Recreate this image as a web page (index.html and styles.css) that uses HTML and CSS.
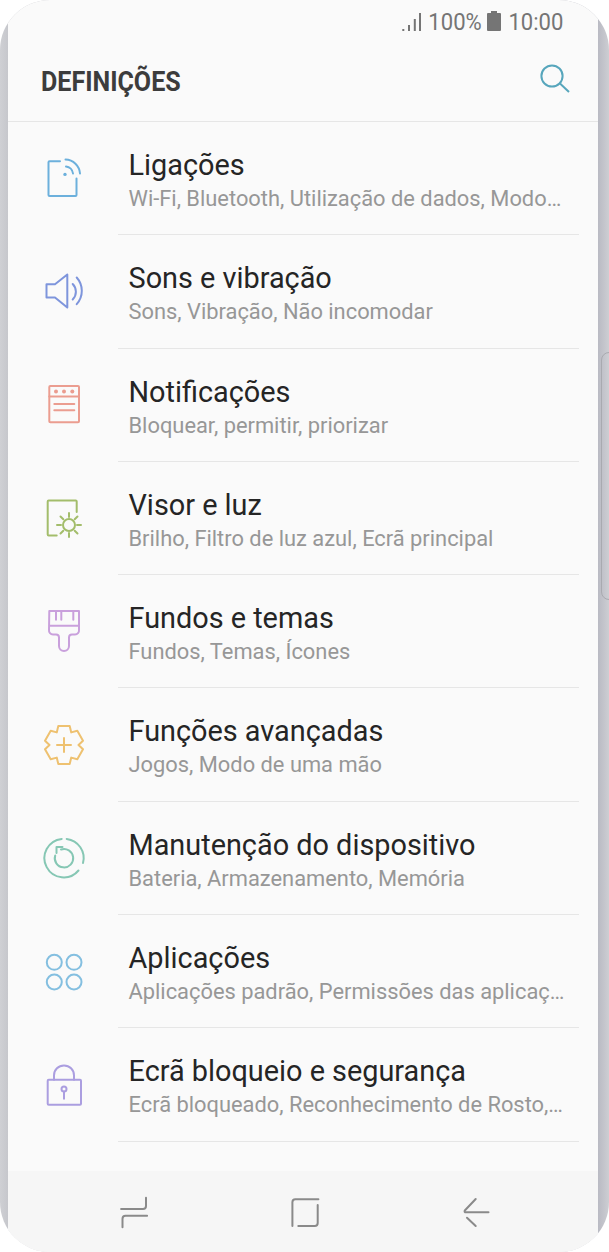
FILE: index.html
```html
<!DOCTYPE html>
<html lang="pt">
<head>
<meta charset="utf-8">
<title>Definições</title>
<link rel="stylesheet" href="styles.css">
</head>
<body>
<div class="phone">
  <span class="side-key"></span>
  <div class="screen">
    <div class="status">
      <svg class="signal" width="20" height="20" viewBox="0 0 20 20"><path d="M2.3 18v2M8 14v6M13.8 8v12M19 2v18"/></svg>
      <span class="pct">100%</span>
      <svg class="battery" width="14" height="20" viewBox="0 0 14 20"><path d="M4 0h6v2h3a1 1 0 0 1 1 1v16a1 1 0 0 1-1 1H1a1 1 0 0 1-1-1V3a1 1 0 0 1 1-1h3z"/></svg>
      <span class="clock">10:00</span>
    </div>
    <header class="toolbar">
      <h1 class="title">DEFINIÇÕES</h1>
      <svg class="search" width="32" height="32" viewBox="0 0 32 32"><circle cx="13" cy="13" r="10.6"/><path d="M21 20.5l9 8.5"/></svg>
    </header>
    <ul class="list">
      <li class="row">
        <svg class="icon c-blue" viewBox="0 0 48 48"><path d="M20 6.2H9.5a1 1 0 0 0-1 1V40a1 1 0 0 0 1 1h26a1 1 0 0 0 1-1V23.5M25.5 4.5A15 15 0 0 1 40 18.5M26 11.5A8 8 0 0 1 33 18.5"/><circle class="fill" cx="25" cy="19.4" r="1.7"/></svg>
        <div class="text"><div class="name">Ligações</div><div class="sub">Wi-Fi, Bluetooth, Utilização de dados, Modo…</div></div>
      </li>
      <li class="row">
        <svg class="icon c-indigo" viewBox="0 0 48 48"><path d="M27.3 6.5L15 16.2H6.5V29.5H15L27.3 39.5ZM32.7 16A11 11 0 0 1 32.7 31.5M36.7 9.5A20 20 0 0 1 36.7 36.2"/></svg>
        <div class="text"><div class="name">Sons e vibração</div><div class="sub">Sons, Vibração, Não incomodar</div></div>
      </li>
      <li class="row">
        <svg class="icon c-red" viewBox="0 0 48 48"><rect x="9.3" y="5" width="29.7" height="36.3" rx="1"/><path d="M9.3 15.6H39M14.3 22.9H34.3M14.3 29.2H34.3"/><circle class="fill" cx="16" cy="10.6" r="2"/><circle class="fill" cx="24" cy="10.6" r="2"/><circle class="fill" cx="32.3" cy="10.6" r="2"/></svg>
        <div class="text"><div class="name">Notificações</div><div class="sub">Bloquear, permitir, priorizar</div></div>
      </li>
      <li class="row">
        <svg class="icon c-green" viewBox="0 0 48 48"><path d="M16.7 40.6H8.7a1 1 0 0 1-1-1V6.6a1 1 0 0 1 1-1H35.7a1 1 0 0 1 1 1V17"/><circle cx="29" cy="30" r="6"/><path d="M29 18v4M29 38v4M17 30h4M37 30h4M20.5 21.5l2.8 2.8M34.7 35.7l2.8 2.8M20.5 38.5l2.8-2.8M34.7 24.3l2.8-2.8"/></svg>
        <div class="text"><div class="name">Visor e luz</div><div class="sub">Brilho, Filtro de luz azul, Ecrã principal</div></div>
      </li>
      <li class="row">
        <svg class="icon c-purple" viewBox="0 0 48 48"><path d="M9.3 3.1H39V22a4 4 0 0 1-4 4.5h-3a3 3 0 0 0-3 3V38a5 5 0 0 1-10 0V29.5a3 3 0 0 0-3-3h-3a4 4 0 0 1-4-4.5ZM9.3 17.7H39M16 3.1V11.7M21.3 3.1V11.7M33.3 3.1V11.7"/></svg>
        <div class="text"><div class="name">Fundos e temas</div><div class="sub">Fundos, Temas, Ícones</div></div>
      </li>
      <li class="row">
        <svg class="icon c-yellow" viewBox="0 0 48 48"><path d="M18.3 5H29.7L31.25 11.4L37.3 9.7L43 19.8L38.5 24L43 28.2L37.3 38.3L31.25 36.6L29.7 43H18.3L16.75 36.6L10.7 38.3L5 28.2L9.5 24L5 19.8L10.7 9.7L16.75 11.4ZM24 17V31M17 24H31"/></svg>
        <div class="text"><div class="name">Funções avançadas</div><div class="sub">Jogos, Modo de uma mão</div></div>
      </li>
      <li class="row">
        <svg class="icon c-teal" viewBox="0 0 48 48"><path d="M26.7 4.9A19.3 19.3 0 0 1 43 29M38.5 36.5A19.3 19.3 0 1 1 21.7 4.9M21 15.5A9.2 9.2 0 1 1 15.2 21.5M22.5 13H16.5V19"/></svg>
        <div class="text"><div class="name">Manutenção do dispositivo</div><div class="sub">Bateria, Armazenamento, Memória</div></div>
      </li>
      <li class="row">
        <svg class="icon c-sky" viewBox="0 0 48 48"><circle cx="14.3" cy="14.3" r="7.5"/><circle cx="34" cy="14.3" r="7.5"/><circle cx="14.3" cy="34" r="7.5"/><circle cx="34" cy="34" r="7.5"/></svg>
        <div class="text"><div class="name">Aplicações</div><div class="sub">Aplicações padrão, Permissões das aplicaç…</div></div>
      </li>
      <li class="row">
        <svg class="icon c-violet" viewBox="0 0 48 48"><rect x="7.7" y="18.7" width="33.3" height="25" rx="1"/><path d="M14 18.7V14.4A10 10 0 0 1 34 14.4V18.7M24 30.6V37.7"/><circle cx="24" cy="28.1" r="2.5"/></svg>
        <div class="text"><div class="name">Ecrã bloqueio e segurança</div><div class="sub">Ecrã bloqueado, Reconhecimento de Rosto,…</div></div>
      </li>
    </ul>
    <nav class="nav">
      <svg class="nav-icon" viewBox="0 0 40 40"><path d="M7.1 19H29a3 3 0 0 0 3-3V7.7M33.1 25.7H11.5a3 3 0 0 0-3 3V37.3"/></svg>
      <svg class="nav-icon" viewBox="0 0 40 40"><path d="M7.4 36V12.3a3 3 0 0 1 3-3H33.4M32.7 15V33a3 3 0 0 1-3 3H13.3"/></svg>
      <svg class="nav-icon" viewBox="0 0 40 40"><path d="M19.7 9L8.8 20.5Q8 22.3 10 22.3H32.5M11 27.7L19.7 36"/></svg>
    </nav>
  </div>
</div>
</body>
</html>
```
FILE: styles.css
```css
* { box-sizing: border-box; }
html, body { margin: 0; padding: 0; background: #fff; }
body { font-family: Roboto, "Liberation Sans", sans-serif; }
.phone {
  position: relative;
  width: 609px;
  height: 1252px;
  padding: 0 11px 0 8px;
  background: linear-gradient(90deg, #cfd0d4 0, #c6c7cc 8px, #b9bac3 598px, #cdced3 609px);
  border-radius: 50px;
  overflow: hidden;
}
.side-key {
  position: absolute;
  left: 601px;
  top: 352px;
  width: 20px;
  height: 248px;
  border: 1px solid #a9aab0;
  border-radius: 8px;
}
.screen {
  display: flex;
  flex-direction: column;
  height: 100%;
  background: #fafafa;
}
.status {
  display: flex;
  align-items: center;
  justify-content: flex-end;
  height: 42px;
  padding-right: 32px;
  color: #757575;
  font-size: 24px;
}
.pct, .clock { display: block; padding-top: 2px; transform: scaleX(.92); }
.pct { margin: 0 2.8px 0 5.7px; }
.clock { margin: 0 0 0 5px; }
.signal { fill: none; stroke: #757575; stroke-width: 2; }
.battery { fill: #757575; }
.toolbar {
  display: flex;
  align-items: center;
  justify-content: space-between;
  height: 80px;
  padding: 0 27px 0 33px;
  border-bottom: 1px solid #e6e6e6;
}
.title {
  margin: 0;
  color: #3c3c3c;
  font-size: 28px;
  font-weight: 700;
  transform: scaleX(.895);
  transform-origin: left center;
}
.search { fill: none; stroke: #57a6bc; stroke-width: 2; margin-top: -6px; }
.list { flex: 1; margin: 0; padding: 0; list-style: none; }
.row {
  display: flex;
  align-items: center;
  height: 113.3px;
  padding: 0 19px 0 32px;
}
.icon {
  flex: none;
  width: 48px;
  height: 48px;
  fill: none;
  stroke: currentColor;
  stroke-width: 2;
  stroke-linejoin: round;
  stroke-linecap: round;
}
.icon .fill { fill: currentColor; stroke: none; }
.c-blue { color: #6cb0dc; }
.c-indigo { color: #7e95dc; }
.c-red { color: #eb9d90; }
.c-green { color: #a3bd6b; }
.c-purple { color: #c9a0dc; }
.c-yellow { color: #eec170; }
.c-teal { color: #86c7b4; }
.c-sky { color: #84bfe0; }
.c-violet { color: #ab9ee0; }
.text {
  flex: 1;
  min-width: 0;
  height: 100%;
  margin-left: 30px;
  padding: 25px 0 0 10.5px;
  border-bottom: 1px solid #e6e6e6;
}
.name {
  color: #252525;
  font-size: 28.85px;
  line-height: 36px;
  white-space: nowrap;
}
.sub {
  margin-top: 2px;
  color: #979797;
  font-size: 21.87px;
  line-height: 28px;
  white-space: nowrap;
}
.nav {
  display: grid;
  grid-template-columns: repeat(3, 171px);
  justify-content: center;
  justify-items: center;
  flex: none;
  height: 81px;
  padding: 19px 0 0 4px;
  background: #f6f6f6;
}
.nav-icon {
  width: 40px;
  height: 40px;
  fill: none;
  stroke: #8a8a8a;
  stroke-width: 2;
  stroke-linecap: round;
  stroke-linejoin: round;
}
```
